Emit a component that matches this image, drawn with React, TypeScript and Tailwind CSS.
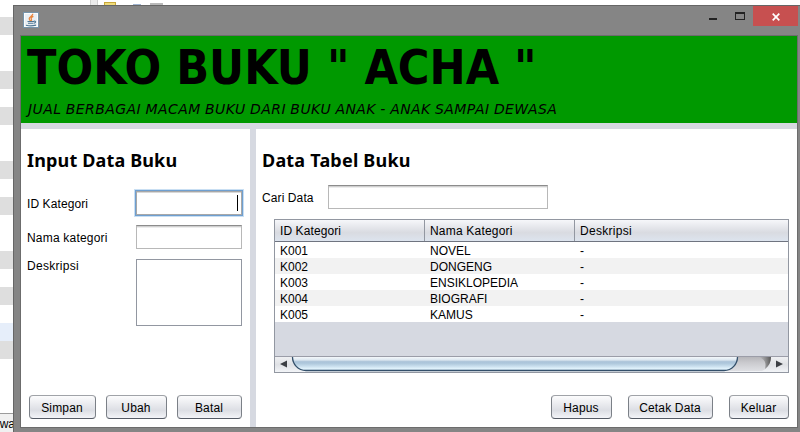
import React from "react";

const rows = [
  ["K001", "NOVEL", "-"],
  ["K002", "DONGENG", "-"],
  ["K003", "ENSIKLOPEDIA", "-"],
  ["K004", "BIOGRAFI", "-"],
  ["K005", "KAMUS", "-"],
];

function Button({ children, className }: { children: React.ReactNode; className: string }) {
  return (
    <button
      className={
        "h-6 shrink-0 rounded-[4px] border border-[#7b8087] border-t-[#a0a3a8] border-b-[#555b66] bg-linear-to-b from-[#fcfcfd] via-[#dcdee4] via-65% to-[#f3f4f8] pt-px pr-px text-center text-[12px] leading-[22px] tracking-[0.15px] whitespace-nowrap " +
        className
      }
    >
      {children}
    </button>
  );
}

function Field({ className }: { className: string }) {
  return (
    <div
      className={
        "h-6 shrink-0 border border-[#b8b8b8] border-t-[#8c8c8c] bg-white shadow-[inset_0_1px_0_#cfcfcf,inset_0_2px_0_#ededed] " +
        className
      }
    />
  );
}

function BackgroundList() {
  return (
    <div className="flex w-[13px] shrink-0 flex-col overflow-hidden bg-white">
      <div className="mt-[17px] h-[18px] shrink-0 bg-[#dedede]" />
      <div className="mt-9 h-[18px] shrink-0 bg-[#dedede]" />
      <div className="mt-[18px] h-[18px] shrink-0 bg-[#dedede]" />
      <div className="mt-9 h-[18px] shrink-0 bg-[#dedede]" />
      <div className="mt-[18px] h-[18px] shrink-0 bg-[#dedede]" />
      <div className="mt-9 h-[18px] shrink-0 bg-[#dedede]" />
      <div className="mt-[18px] h-[18px] shrink-0 bg-[#dedede]" />
      <div className="mt-[18px] h-[18px] shrink-0 bg-[#e6eefa]" />
      <div className="h-[18px] shrink-0 bg-[#dedede]" />
      <div className="mt-[54px] flex h-[19px] shrink-0 justify-end border-t border-[#9b9b9b] bg-[#f0f0f0] text-[12px] leading-[20px]">
        <span className="-mr-[2px]">awa</span>
      </div>
    </div>
  );
}

function JavaIcon() {
  return (
    <svg className="h-4 w-4" viewBox="0 0 16 16" fill="none">
      <rect x="0.5" y="0.5" width="15" height="15" fill="#e9eef3" stroke="#7593aa" />
      <rect x="1.5" y="1.5" width="13" height="13" stroke="#fbfcfd" />
      <path d="M9.8 1.8C10 4 6 4.8 6.2 6.8c.1 1 1 1.4 1.2 2.2M10.4 4.4C8.6 5 7.6 6 8.4 7.2c.4.7.2 1.200-.4 1.700" stroke="#e8843c" strokeWidth="1.300" />
      <path d="M4.500 9.500h6.500M5 11.300h5.500M10.800 9.300c2.400-.7 2.400 1.400.2 2M3 13.200c3 .9 7 .8 10-.1" stroke="#4f7895" strokeWidth="1.100" />
    </svg>
  );
}

function TitleBar() {
  return (
    <div className="flex h-[29px] items-start">
      <div className="mt-[6px] ml-[9px]">
        <JavaIcon />
      </div>
      <svg className="ml-auto h-5 w-[46px]" viewBox="0 0 46 20" shapeRendering="crispEdges">
        <rect x="2" y="12" width="8" height="2" fill="#222" />
        <path d="M28 6h10v8H28zM29 8v5h8V8z" fill="#222" fillRule="evenodd" />
      </svg>
      <div className="mr-[2px] flex h-5 w-[45px] items-center justify-center bg-[#c75050]">
        <svg className="mt-px h-2 w-2" viewBox="0 0 8 8">
          <path d="M.7.7l6.600 6.600M7.300.7L.7 7.300" stroke="#fff" strokeWidth="1.700" />
        </svg>
      </div>
    </div>
  );
}

function ScrollBar() {
  return (
    <svg className="block h-4 w-[513px]" viewBox="0 0 513 16">
      <defs>
        <linearGradient id="thumb" x1="0" y1="0" x2="0" y2="1">
          <stop offset="0" stopColor="#f4f8fb" />
          <stop offset="0.22" stopColor="#dce7f0" />
          <stop offset="0.35" stopColor="#aac2d8" />
          <stop offset="0.5" stopColor="#b1cade" />
          <stop offset="0.85" stopColor="#dff1fb" />
          <stop offset="1" stopColor="#cfe4f1" />
        </linearGradient>
        <linearGradient id="track" x1="0" y1="0" x2="0" y2="1">
          <stop offset="0" stopColor="#b6b6ba" />
          <stop offset="0.4" stopColor="#cacace" />
          <stop offset="1" stopColor="#dfe0e4" />
        </linearGradient>
        <linearGradient id="arrowBg" x1="0" y1="0" x2="0" y2="1">
          <stop offset="0" stopColor="#f1f2f4" />
          <stop offset="0.55" stopColor="#dfe1e5" />
          <stop offset="1" stopColor="#f2f4f7" />
        </linearGradient>
        <linearGradient id="trackEnd" x1="0" y1="0" x2="1" y2="0">
          <stop offset="0" stopColor="#777" stopOpacity="0" />
          <stop offset="1" stopColor="#555" />
        </linearGradient>
      </defs>
      <rect width="513" height="16" fill="url(#arrowBg)" />
      <path d="M17 1H496C496 8 492 13 487 15H30C22 13 17 9 17 1z" fill="url(#track)" />
      <path d="M484 1H496C496 6 494 10 490 13C491 8 491 4 484 1z" fill="url(#trackEnd)" />
      <path d="M17.500 1C17.500 8 23 14.500 31 14.500H449C457 14.500 462.500 8 462.500 1z" fill="url(#thumb)" />
      <path d="M17.500 1C17.500 8 23 14.500 31 14.500H449C457 14.500 462.500 8 462.500 1" fill="none" stroke="#34506b" strokeWidth="1.300" />
      <path d="M0 .5H513" stroke="#9b9da8" />
      <path d="M5 8l7-3.500v7zM508 8l-7-3.500v7z" fill="#3c3f44" />
    </svg>
  );
}

function DataTable() {
  return (
    <div className="mt-[10px] ml-3 h-[154px] w-[515px] border border-[#9297a1] bg-[#d6d9e1]">
      <div className="flex h-[22px] border-b border-[#6f7480] bg-linear-to-b from-[#f6f7fa] via-[#d9dbe1] via-60% to-[#dde4ee] leading-[22px]">
        <div className="w-[150px] border-r border-[#9297a1] pl-[5px] tracking-[0.09px]">ID Kategori</div>
        <div className="w-[150px] border-r border-[#9297a1] pl-[5px] tracking-[0.2px]">Nama Kategori</div>
        <div className="pl-[5px] tracking-[0.3px]">Deskripsi</div>
      </div>
      <div>
        {rows.map((r) => (
          <div key={r[0]} className="flex h-4 leading-[18px] odd:bg-white even:bg-[#f2f2f2]">
            <div className="w-[150px] pl-[5px]">{r[0]}</div>
            <div className="w-[150px] pl-[5px]">{r[1]}</div>
            <div className="pl-[5px]">{r[2]}</div>
          </div>
        ))}
      </div>
      <div className="h-[34px]" />
      <ScrollBar />
    </div>
  );
}

export default function App() {
  return (
    <div className="flex h-[432px] w-[800px] overflow-hidden bg-white font-['Liberation_Sans',Arial,sans-serif] text-[12px] text-black">
      <BackgroundList />
      <div className="flex min-w-0 grow flex-col">
        <div className="flex h-[5px] shrink-0 items-start bg-white">
          <div className="ml-[77px] h-[5px] w-2 border-x border-[#cfcfcf] bg-[#ebebeb]" />
          <div className="mt-[2px] ml-[6px] h-[3px] w-3 border border-b-0 border-[#c9a83a] bg-[#f0dc7a]" />
          <div className="mt-[4px] ml-[17px] h-px w-2 bg-[#9fb3cf]" />
          <div className="mt-[3px] ml-[9px] h-[2px] w-[13px] bg-[#b9b9b9]" />
        </div>
        <div className="flex grow flex-col border-t border-l border-[#666] bg-[#858585]">
          <TitleBar />
          <div className="ml-[6px] flex h-[393px] w-[778px] flex-col border border-[#6c6c6c] bg-[#d6d9e1]">
            <header className="h-[87px] bg-[#009900] pl-[6px] whitespace-nowrap">
              <h1 className="h-[62px] font-['DejaVu_Sans_Condensed','DejaVu_Sans',sans-serif] text-[48px] leading-[62px] font-bold">TOKO BUKU " ACHA "</h1>
              <p className="pl-px font-['DejaVu_Sans',sans-serif] text-[14px] leading-[22px] tracking-[0.42px] [word-spacing:-0.5px] italic">
                JUAL BERBAGAI MACAM BUKU DARI BUKU ANAK - ANAK SAMPAI DEWASA
              </p>
            </header>
            <div className="mt-[6px] flex h-[298px] gap-[6px]">
              <section className="flex w-[229px] flex-col bg-white pr-2 pl-[6px]">
                <h2 className="mt-[17px] h-7 font-['Noto_Sans',sans-serif] text-[18px] leading-7 font-bold tracking-[0.15px] whitespace-nowrap">Input Data Buku</h2>
                <div className="mt-[17px] flex h-6 items-center justify-between">
                  <span className="pt-[2px] tracking-[0.09px]">ID Kategori</span>
                  <div className="flex h-6 w-[106px] items-center justify-end border border-[#a8a8a8] bg-white pr-[3px] shadow-[0_0_0_1px_#6f9fd0,0_0_0_2px_#c9dff3,inset_0_1px_0_#d8d8d8]">
                    <div className="h-4 w-px bg-black" />
                  </div>
                </div>
                <div className="mt-[10px] flex h-6 items-center justify-between">
                  <span className="pt-[2px] tracking-[0.2px]">Nama kategori</span>
                  <Field className="w-[106px]" />
                </div>
                <div className="mt-[10px] flex justify-between">
                  <span className="leading-[14px] tracking-[0.3px]">Deskripsi</span>
                  <div className="h-[67px] w-[106px] border border-[#9297a1] bg-white" />
                </div>
                <div className="mt-auto mb-2 ml-[2px] flex justify-between">
                  <Button className="w-[67px]">Simpan</Button>
                  <Button className="w-[61px]">Ubah</Button>
                  <Button className="w-[65px]">Batal</Button>
                </div>
              </section>
              <section className="flex w-[541px] flex-col bg-white pr-2 pl-[6px]">
                <h2 className="mt-[17px] h-7 font-['Noto_Sans',sans-serif] text-[18px] leading-7 font-bold tracking-[0.2px] whitespace-nowrap">Data Tabel Buku</h2>
                <div className="mt-[11px] flex h-6 items-center">
                  <span className="w-[66px] pt-[2px] tracking-[0.1px]">Cari Data</span>
                  <Field className="w-[220px]" />
                </div>
                <DataTable />
                <div className="mt-auto mb-2 flex justify-end gap-4">
                  <Button className="w-[61px]">Hapus</Button>
                  <Button className="w-[85px]">Cetak Data</Button>
                  <Button className="w-[60px]">Keluar</Button>
                </div>
              </section>
            </div>
          </div>
        </div>
      </div>
    </div>
  );
}
